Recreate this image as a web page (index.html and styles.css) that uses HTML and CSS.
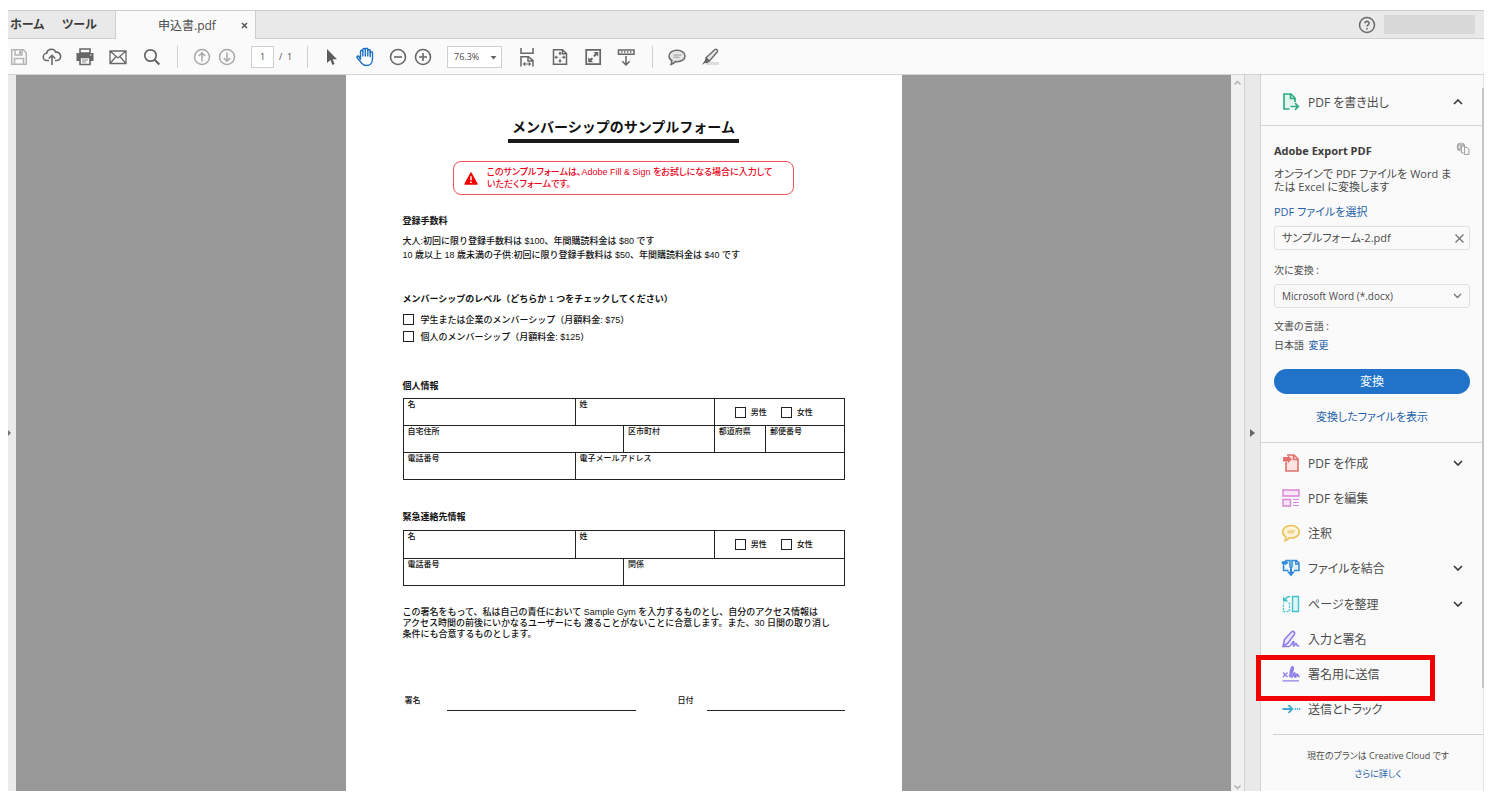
FILE: index.html
```html
<!DOCTYPE html>
<html lang="ja">
<head>
<meta charset="utf-8">
<title>申込書.pdf</title>
<link rel="stylesheet" href="styles.css">
</head>
<body>
<div class="app">
  <header class="tabs">
    <button class="tab tab-home">ホーム</button>
    <button class="tab tab-tools">ツール</button>
    <div class="tab-doc">
      <span class="tab-name">申込書.pdf</span>
      <button class="tab-close" aria-label="閉じる"><svg width="7" height="7" viewBox="0 0 7 7"><path d="M1 1l5 5M6 1L1 6" stroke="#555" stroke-width="1.5"/></svg></button>
    </div>
    <button class="help" aria-label="ヘルプ"><svg width="18" height="18" viewBox="0 0 18 18" fill="none" stroke="#6a6a6a" stroke-width="1.5"><circle cx="9" cy="9" r="7.5"/><path d="M6.9 7.3c0-2.700 4.300-2.500 4.200 0 0 1.500-2.100 1.600-2.100 3.300M9 11.900v1.500" stroke-width="1.600"/></svg></button>
    <div class="account"></div>
  </header>

  <div class="toolbar">
    <div class="group">
      <button class="icon" aria-label="保存"><svg viewBox="0 0 20 20" fill="none" stroke="#b4b4b4" stroke-width="1.500"><path d="M2.700 2.700h11.600l3 3v11.600H2.700zM6 3v5h7V3M5.500 17v-5.500h9V17"/><path d="M11 4v3" stroke-width="2"/></svg></button>
      <button class="icon" aria-label="アップロード"><svg viewBox="0 0 20 20" fill="none" stroke="#6a6a6a" stroke-width="1.600"><path d="M7 13.500H5a3.600 3.600 0 0 1-.3-7.200C5.200 1.600 12 .8 13.800 5.200c3-.3 5 2 4.800 4.600-.2 2.300-1.800 3.700-4 3.700H13"/><path d="M10 18V8.500M6.800 11.500L10 8.300l3.200 3.200"/></svg></button>
      <button class="icon" aria-label="印刷"><svg viewBox="0 0 20 20"><path d="M5 2h10v4H5z" fill="#f9f9f9" stroke="#666" stroke-width="1.600"/><path d="M1.500 6h17v8h-17z" fill="#666"/><path d="M5 10.500h10v7H5z" fill="#f9f9f9" stroke="#666" stroke-width="1.600"/><path d="M7 13h6M7 15h4" stroke="#888"/><path d="M15 8h1.500" stroke="#fff"/></svg></button>
      <button class="icon" aria-label="メール"><svg viewBox="0 0 20 20" fill="none" stroke="#6a6a6a" stroke-width="1.300"><path d="M2 4h16v12.500H2zM2 4l8 7 8-7M2 16.500l6-7M18 16.500l-6-7"/></svg></button>
      <button class="icon" aria-label="検索"><svg viewBox="0 0 20 20" fill="none" stroke="#666"><circle cx="9.500" cy="8.500" r="5.700" stroke-width="1.700"/><path d="M13.700 12.700l4.600 4.800" stroke-width="2.200"/></svg></button>
    </div>
    <div class="rule"></div>
    <div class="group tight">
      <button class="icon" aria-label="前のページ"><svg viewBox="0 0 20 20" fill="none" stroke="#a8a8a8" stroke-width="1.500"><circle cx="10" cy="10" r="7.500"/><path d="M10 14.500V6M6.800 9L10 5.800 13.200 9"/></svg></button>
      <button class="icon" aria-label="次のページ"><svg viewBox="0 0 20 20" fill="none" stroke="#a8a8a8" stroke-width="1.500"><circle cx="10" cy="10" r="7.500"/><path d="M10 5.500V14M6.800 11l3.200 3.200 3.200-3.200"/></svg></button>
    </div>
    <input class="page-no" value="1" aria-label="ページ">
    <span class="page-count">/&nbsp; 1</span>
    <div class="rule"></div>
    <div class="group">
      <button class="icon" aria-label="選択"><svg viewBox="0 0 20 20"><path d="M5 2v14l3.400-3 2 5 2.200-.9-2-4.900H15z" fill="#5c5c5c"/></svg></button>
      <button class="icon" aria-label="手のひら"><svg viewBox="0 0 20 20" fill="#fff" stroke="#1d70c4" stroke-width="1.400" stroke-linejoin="round" stroke-linecap="round"><path d="M5.500 12.200V4.500c0-1.600 2.300-1.600 2.300 0V2.800c0-1.700 2.500-1.700 2.500 0v-.3c0-1.600 2.500-1.600 2.500 0v1c0-1.500 2.400-1.500 2.400 0v2.300c0-1.500 2.300-1.500 2.300 0V12c0 4-2.500 6.500-6 6.500-3.200 0-4.600-1.300-6-3.800L2 10.500c-.6-1.400 1.200-2.200 2-.9z"/><path d="M7.800 4.500V9M10.300 2.800V9M12.800 3v6M15.200 4v5.500"/></svg></button>
      <button class="icon" aria-label="縮小"><svg viewBox="0 0 20 20" fill="none" stroke="#666" stroke-width="1.600"><circle cx="10" cy="10" r="7.500"/><path d="M6 10h8"/></svg></button>
    </div>
    <button class="icon zoom-in" aria-label="拡大"><svg viewBox="0 0 20 20" fill="none" stroke="#666" stroke-width="1.600"><circle cx="10" cy="10" r="7.500"/><path d="M6 10h8M10 6v8"/></svg></button>
    <div class="zoom">
      <select aria-label="表示倍率"><option>76.3%</option></select>
      <svg width="7" height="5" viewBox="0 0 7 5"><path d="M.5 1h6L3.500 4.500z" fill="#666"/></svg>
    </div>
    <div class="group">
      <button class="icon" aria-label="幅に合わせる"><svg viewBox="0 0 20 20" fill="none" stroke="#666" stroke-width="1.500"><path d="M4 1v5.200h12V1M4 19.500V9.700h7.500l4.500 4v5.800M11 9.700V14h5"/><path d="M6.500 17h7M8.300 15.300L6.500 17l1.800 1.700M11.700 15.300l1.800 1.700-1.800 1.700" stroke-width="1.100"/></svg></button>
      <button class="icon" aria-label="ページ全体"><svg viewBox="0 0 20 20" fill="none" stroke="#666" stroke-width="1.500"><path d="M3.500 2.700h9l4 3.800v10.800h-13zM12.500 3v3.700h4"/><path d="M10 5.500v2.700M10 11.800v3M5.500 10.200h2.700M11.800 10.200h2.700M8.700 6.700L10 5.400l1.300 1.300M8.700 13.700L10 15l1.300-1.300M6.500 8.900l-1.300 1.300 1.300 1.300M13.500 8.900l1.300 1.300-1.300 1.300" stroke-width="1.100"/></svg></button>
      <button class="icon" aria-label="フルスクリーン"><svg viewBox="0 0 20 20"><path d="M3.200 2.800h14v14.400h-14z" fill="none" stroke="#666" stroke-width="1.700"/><path d="M10.500 5h4.700v4.700L13.700 8l-2 2-1.500-1.500 2-2zM5.200 10.300v4.900h4.900l-1.700-1.700L10.200 12l-1.600-1.600-1.700 1.700z" fill="#666"/></svg></button>
      <button class="icon" aria-label="スクロール"><svg viewBox="0 0 20 20" fill="none" stroke="#666" stroke-width="1.500"><path d="M2.500 3h15.500v4.200H2.500z"/><path d="M5 5.100h11" stroke-dasharray="1.500 1.500"/><path d="M10 9v9M6.300 14.200L10 18l3.700-3.800"/></svg></button>
    </div>
    <div class="rule"></div>
    <div class="group">
      <button class="icon" aria-label="注釈"><svg viewBox="0 0 20 20" fill="#e6e6e6" stroke="#6a6a6a" stroke-width="1.500"><path d="M10 3.200c4.600 0 8 2.400 8 5.700 0 3.400-3.400 5.800-8 5.800l-1.800-.2c-1.200 1.700-2.600 2.700-4.200 3 .6-1.200.9-2.400.8-4C3 12.400 2 10.800 2 8.900c0-3.300 3.400-5.700 8-5.700z"/><path d="M6.500 8h8M6.500 10.200h6" stroke="#999" stroke-width="1.100"/></svg></button>
      <button class="icon" aria-label="ハイライト"><svg viewBox="0 0 20 20"><path d="M7 15h12v3H6z" fill="#ddd"/><path d="M6 10.800L15 2.600c1.300-1 3.400.7 2.400 2.200l-8 9.100z" fill="#e6e6e6" stroke="#6a6a6a" stroke-width="1.400"/><path d="M5.800 10.500l4 3.600-2.600 2.200L5 16l-3.200 2 3-4.500z" fill="#666"/></svg></button>
    </div>
  </div>

  <main class="work">
    <button class="left-strip" aria-label="ナビゲーションパネル"><svg width="4" height="6" viewBox="0 0 4 6"><path d="M0 0l3 3-3 3z" fill="#777"/></svg></button>
    <div class="viewer">
      <article class="paper">
        <h1>メンバーシップのサンプルフォーム</h1>
        <div class="notice">
          <svg width="14" height="13" viewBox="0 0 14 13"><path d="M7 1l6 11H1z" fill="#f40000" stroke="#f40000" stroke-width="1.500" stroke-linejoin="round"/><path d="M7 4.200v4M7 9.500V11" stroke="#fff" stroke-width="1.500"/></svg>
          <p>このサンプルフォームは、Adobe Fill &amp; Sign をお試しになる場合に入力して<br>いただくフォームです。</p>
        </div>
        <section class="fees">
          <h2>登録手数料</h2>
          <p>大人:初回に限り登録手数料は $100、年間購読料金は $80 です</p>
          <p>10 歳以上 18 歳未満の子供:初回に限り登録手数料は $50、年間購読料金は $40 です</p>
        </section>
        <section class="levels">
          <h2>メンバーシップのレベル（どちらか <span class="num">1</span> つをチェックしてください）</h2>
          <label class="check"><input type="checkbox">学生または企業のメンバーシップ（月額料金: $75）</label>
          <label class="check"><input type="checkbox">個人のメンバーシップ（月額料金: $125）</label>
        </section>
        <section class="personal">
          <h2>個人情報</h2>
          <table>
            <colgroup><col class="c1"><col class="c2"><col class="c3"><col class="c4"><col class="c5"></colgroup>
            <tr><td><label for="p1">名</label><input id="p1"></td><td colspan="2"><label for="p2">姓</label><input id="p2"></td><td colspan="2"><div class="sex"><label class="check"><input type="checkbox">男性</label><label class="check"><input type="checkbox">女性</label></div></td></tr>
            <tr><td colspan="2"><label for="p3">自宅住所</label><input id="p3"></td><td><label for="p4">区市町村</label><input id="p4"></td><td><label for="p5">都道府県</label><input id="p5"></td><td><label for="p6">郵便番号</label><input id="p6"></td></tr>
            <tr><td><label for="p7">電話番号</label><input id="p7"></td><td colspan="4"><label for="p8">電子メールアドレス</label><input id="p8"></td></tr>
          </table>
        </section>
        <section class="emergency">
          <h2>緊急連絡先情報</h2>
          <table>
            <colgroup><col class="c1"><col class="c2"><col class="c3"><col class="c4"><col class="c5"></colgroup>
            <tr class="tall"><td><label for="e1">名</label><input id="e1"></td><td colspan="2"><label for="e2">姓</label><input id="e2"></td><td colspan="2"><div class="sex"><label class="check"><input type="checkbox">男性</label><label class="check"><input type="checkbox">女性</label></div></td></tr>
            <tr><td colspan="2"><label for="e3">電話番号</label><input id="e3"></td><td colspan="3"><label for="e4">関係</label><input id="e4"></td></tr>
          </table>
        </section>
        <p class="consent">この署名をもって、私は自己の責任において Sample Gym を入力するものとし、自分のアクセス情報は<br>アクセス時間の前後にいかなるユーザーにも 渡ることがないことに合意します。また、30 日間の取り消し<br>条件にも合意するものとします。</p>
        <div class="signature">
          <label for="sign">署名</label><input id="sign">
          <label for="date" class="date">日付</label><input id="date">
        </div>
      </article>
    </div>
    <div class="scroll">
      <svg width="7" height="5" viewBox="0 0 7 5"><path d="M.5 4.500l3-3 3 3" fill="none" stroke="#aaa" stroke-width="1.300"/></svg>
      <svg width="7" height="5" viewBox="0 0 7 5"><path d="M.5.5l3 3 3-3" fill="none" stroke="#aaa" stroke-width="1.300"/></svg>
    </div>
    <button class="right-strip" aria-label="ツールパネル"><svg width="5" height="8" viewBox="0 0 5 8"><path d="M0 0l5 4-5 4z" fill="#666"/></svg></button>

    <aside class="side">
      <div class="thumb"></div>
      <button class="row row-head">
        <svg class="row-icon" viewBox="0 0 20 20" fill="none" stroke="#2dac84" stroke-width="1.700"><path d="M8.500 17H3V2h7l4 4v4" fill="#e3f4ee"/><path d="M9.500 2v4.500H14M9.500 14.500H16M14 11.200l3.300 3.300-3.300 3.300"/></svg>
        <span>PDF を書き出し</span>
        <svg class="chev" viewBox="0 0 10 6"><path d="M1 5l4-4 4 4" fill="none" stroke="#3c3c3c" stroke-width="1.700"/></svg>
      </button>
      <section class="export">
        <h2>Adobe Export PDF<svg width="14" height="14" viewBox="0 0 14 14" fill="none" stroke="#a4a4a4"><circle cx="5" cy="5" r="4" fill="#aaa"/><path d="M1 5h8M5 1c-2 2.500-2 5.500 0 8M5 1c2 2.500 2 5.500 0 8" stroke="#eee" stroke-width=".6"/><path d="M5.500 4h3v7h-3zM8.500 5.500h3l1.500 1.500v5.500H8.500z" fill="#f5f5f5"/></svg></h2>
        <p class="desc">オンラインで PDF ファイルを Word ま<br>たは Excel に変換します</p>
        <a class="pick" href="#">PDF ファイルを選択</a>
        <div class="file"><span>サンプルフォーム-2.pdf</span><button aria-label="削除"><svg width="9" height="9" viewBox="0 0 9 9"><path d="M.5.5l8 8M8.500.5l-8 8" stroke="#777" stroke-width="1.400"/></svg></button></div>
        <label class="to" for="fmt">次に変換 :</label>
        <div class="format">
          <select id="fmt"><option>Microsoft Word (*.docx)</option></select>
          <svg width="9" height="6" viewBox="0 0 9 6"><path d="M1 1l3.500 3.500L8 1" fill="none" stroke="#777" stroke-width="1.400"/></svg>
        </div>
        <p class="lang">文書の言語 :</p>
        <p class="lang-value">日本語 <a href="#">変更</a></p>
        <button class="convert">変換</button>
        <a class="show" href="#">変換したファイルを表示</a>
      </section>
      <nav class="tools">
        <button class="row">
          <svg class="row-icon" viewBox="0 0 20 20" fill="none" stroke="#e0716c" stroke-width="1.600"><path d="M5 9v9h12V6l-4-4H6" fill="#fbe3e1"/><path d="M12.500 2v4.500H17"/><path d="M2 4h5V2.500l4 3.800-4 3.700V8.500H2z" fill="#e0716c" stroke="none"/></svg>
          <span>PDF を作成</span><svg class="chev" viewBox="0 0 10 6"><path d="M1 1l4 4 4-4" fill="none" stroke="#3c3c3c" stroke-width="1.700"/></svg></button>
        <button class="row">
          <svg class="row-icon" viewBox="0 0 20 20" fill="none" stroke="#dc82d8" stroke-width="1.400"><path d="M2 2h16v6H2zM2 11.500h7.500V18H2z" fill="#fae6f9"/><path d="M12 11.500h6M12 14.500h6M12 17.500h6" stroke-width="1.100"/></svg>
          <span>PDF を編集</span></button>
        <button class="row">
          <svg class="row-icon" viewBox="0 0 20 20" fill="#fdf3d9" stroke="#edc057" stroke-width="1.600"><path d="M10 2.500c4.800 0 8.300 2.700 8.300 6.300S14.800 15 10 15l-1.800-.2c-1.200 1.700-2.700 2.700-4.200 3 .6-1.200.8-2.500.7-4C2.800 12.700 1.700 11 1.700 8.800c0-3.600 3.500-6.300 8.300-6.300z"/><path d="M6.500 8h7.500M6.500 9.800h6" stroke-width="1.100"/></svg>
          <span>注釈</span></button>
        <button class="row">
          <svg class="row-icon" viewBox="0 0 20 20" fill="#e1effb" stroke="#318bd8" stroke-width="1.500"><path d="M7.500 12.500h-5V6M4.500 2.500H9v7M11 9.500v-7h4.500L18 5v7.500h-5M14.800 2.500V6H18"/><path d="M.8 3.200h3V1.800L7.500 4.700 3.800 7.500V6h-3z" fill="#318bd8" stroke="none"/><path d="M10 9v6" stroke-width="2"/><path d="M6 13.500h8L10 18.500z" fill="#318bd8" stroke="none"/></svg>
          <span>ファイルを結合</span><svg class="chev" viewBox="0 0 10 6"><path d="M1 1l4 4 4-4" fill="none" stroke="#3c3c3c" stroke-width="1.700"/></svg></button>
        <button class="row">
          <svg class="row-icon" viewBox="0 0 20 20" fill="none" stroke="#45c3cb" stroke-width="1.400"><path d="M11.500 2.500h6v15h-6z" fill="#dcf5f6"/><path d="M8.500 8.500v9h-6v-9" stroke-dasharray="2 1.300"/><path d="M9 2.500C6 2.500 5 3.500 4.500 6"/><path d="M2 2.500v5h5.500z" fill="#45c3cb" stroke="none"/></svg>
          <span>ページを整理</span><svg class="chev" viewBox="0 0 10 6"><path d="M1 1l4 4 4-4" fill="none" stroke="#3c3c3c" stroke-width="1.700"/></svg></button>
        <button class="row">
          <svg class="row-icon" viewBox="0 0 20 20" fill="none" stroke="#8e80ea" stroke-width="1.600" stroke-linejoin="round" stroke-linecap="round"><path d="M2 17.500l1.500-7L10.500 3c1.700-1.500 4.200.5 2.800 2.500L7 14z" fill="#ebe8fc"/><path d="M2 17.500h6c2.300 0 3.200-5 4.500-5 1.200 0-1 4.500.3 4.500 1.200 0 1.300-2.800 2.200-2.800s-.3 3 2.800 2.800"/></svg>
          <span>入力と署名</span></button>
        <button class="row marked">
          <svg class="row-icon" viewBox="0 0 20 20" fill="none" stroke="#8e80ea" stroke-width="1.300"><path d="M2 8.500l4.500 4.500M6.500 8.500L2 13M1.500 16.800h16.500"/><path d="M8 12.500c3-1.500 5.200-9.500 3.500-9.500-1.700 0-3.200 10-1 10 1.700 0 2.200-4 3-4s-.5 4 .7 4 1-2.700 1.800-2.700.2 2.500 2.500 2.200" stroke-width="1.900"/></svg>
          <span>署名用に送信</span></button>
        <button class="row">
          <svg class="row-icon" viewBox="0 0 20 20" fill="none" stroke="#3fa9d4" stroke-width="1.800"><path d="M1.500 10h9.500M7.500 6.200L11.300 10l-3.800 3.800"/><path d="M13.500 10h6" stroke-width="1.300" stroke-dasharray="1.500 .7"/></svg>
          <span>送信とトラック</span></button>
      </nav>
      <footer class="plan">現在のプランは Creative Cloud です<a href="#">さらに詳しく</a></footer>
    </aside>
  </main>
</div>
</body>
</html>
```

FILE: styles.css
```css
* { box-sizing: border-box; }

body {
  margin: 0;
  padding: 10px 14px 13px 8px;
  height: 100vh;
  background: #fff;
  color: #4b4b4b;
  font-family: "Open Sans", "Noto Sans CJK JP", sans-serif;
  font-size: 11px;
  font-feature-settings: "palt";
}

h1, h2, p { margin: 0; }

button, input, select {
  margin: 0;
  padding: 0;
  border: 0;
  background: none;
  color: inherit;
  font: inherit;
  font-feature-settings: inherit;
}

svg { display: block; flex: none; }
a { color: #1f5fa8; text-decoration: none; }

.app { height: 100%; display: flex; flex-direction: column; }

/* Tabs */
.tabs {
  display: flex;
  align-items: center;
  height: 29px;
  flex: none;
  background: #e9e9e9;
  border-top: 1px solid #cdcdcd;
  border-bottom: 1px solid #cdcdcd;
}
.tab { font-size: 12px; font-weight: 600; color: #3c3c3c; line-height: 20px; }
.tab-home { padding-left: 2px; width: 54px; text-align: left; }
.tab-tools { width: 53px; text-align: left; }
.tab-doc {
  display: flex;
  align-items: center;
  justify-content: space-between;
  width: 141px;
  height: 29px;
  margin: 0 0 -1px;
  padding: 0 7px 0 42px;
  background: #fafafa;
  border: solid #cdcdcd;
  border-width: 0 1px;
  font-size: 12px;
}
.help { margin-left: auto; }
.account { width: 91px; height: 19px; margin: 0 9px 0 8px; background: #d8d8d8; }

/* Toolbar */
.toolbar {
  display: flex;
  align-items: center;
  flex: none;
  height: 36px;
  padding-left: 1px;
  background: #fafafa;
  border-bottom: 1px solid #d4d4d4;
}
.group { display: flex; gap: 13px; }
.tight { gap: 5px; }
.icon { width: 20px; height: 20px; }
.icon svg { width: 20px; height: 20px; }
.rule { width: 1px; height: 22px; margin: 0 14px 0 16px; background: #d0d0d0; }
.zoom-in { margin-left: 5px; }
.page-no {
  width: 23px;
  height: 22px;
  margin: 0 5px 0 14px;
  border: 1px solid #cfcfcf;
  background: #fff;
  font-size: 9px;
  text-align: center;
}
.page-count { width: 12px; font-size: 9px; white-space: nowrap; }
.zoom { position: relative; margin: 0 15px 0 14px; }
.zoom select {
  display: block;
  width: 55px;
  height: 22px;
  padding-left: 6px;
  appearance: none;
  border: 1px solid #cfcfcf;
  background: #fff;
  font-size: 9px;
}
.zoom svg { position: absolute; right: 5px; top: 9px; pointer-events: none; }

/* Work area */
.work { display: flex; flex: 1; min-height: 0; }
.left-strip { width: 8px; background: #ebebeb; }
.viewer { flex: 1; display: flex; justify-content: center; background: #999; overflow: hidden; }
.scroll {
  display: flex;
  flex-direction: column;
  justify-content: space-between;
  align-items: center;
  width: 14px;
  padding: 5px 0 1px;
  background: #f1f1f1;
  border-right: 1px solid #d2d2d2;
}
.right-strip {
  width: 15px;
  padding-left: 5px;
  background: #e9e9e9;
}

/* PDF page */
.paper {
  width: 556px;
  padding: 43px 57px 0;
  background: #fff;
  color: #111;
  font: 500 9px/14px "Liberation Sans", "Noto Sans CJK JP", sans-serif;
  font-feature-settings: normal;
}
.paper h1 {
  width: fit-content;
  margin: 0 auto;
  padding: 0 4px 3px;
  border-bottom: 4px solid #1c1a1c;
  font-size: 14px;
  line-height: 18px;
}
.paper h2 { font-size: 9px; font-weight: 700; line-height: 14px; }
.paper .num { font-weight: 400; }
.notice {
  display: flex;
  align-items: center;
  gap: 9px;
  width: 341px;
  margin: 18px auto 0;
  padding: 4px 0 4px 10px;
  border: 1px solid #f0505a;
  border-radius: 8px;
  color: #ec0018;
  line-height: 12px;
  font-feature-settings: "palt";
  white-space: nowrap;
}
.fees { margin-top: 19px; }
.fees h2 { margin-bottom: 6px; }
.levels { margin-top: 30px; }
.levels h2 { margin-bottom: 5px; }
.check { display: flex; align-items: center; gap: 7px; height: 17px; }
.check input {
  width: 11px;
  height: 11px;
  appearance: none;
  border: 1px solid #222;
  background: #fff;
}
.personal { margin-top: 34px; }
.personal h2 { margin-bottom: 5px; }
.emergency { margin-top: 30px; }
.emergency h2 { margin-bottom: 6px; }
table { width: 100%; table-layout: fixed; border-collapse: collapse; font-size: 8px; }
.c1 { width: 39%; }
.c2 { width: 11%; }
.c3 { width: 20.6%; }
.c4 { width: 11.6%; }
.c5 { width: 17.8%; }
td { height: 27px; padding: 0 4px; border: 1px solid #222; vertical-align: top; line-height: 12px; }
.tall td { height: 28px; }
td > label { display: block; }
td > input { display: block; width: 100%; height: 12px; }
.sex { display: flex; gap: 14px; padding: 5px 0 0 16px; }
.sex .check { gap: 5px; }
.consent { margin-top: 21px; line-height: 11px; white-space: nowrap; }
.signature {
  display: grid;
  grid-template-columns: 44fr 189fr 71fr 138fr;
  margin-top: 54px;
  font-size: 8px;
}
.signature label { padding-left: 2px; }
.signature .date { padding: 0 13px 0 0; text-align: right; }
.signature input { width: 100%; height: 17px; border-bottom: 1px solid #222; }

/* Tool panel */
.side {
  position: relative;
  display: flex;
  flex-direction: column;
  width: 224px;
  background: #fafafa;
  border-left: 1px solid #d2d2d2;
  border-right: 1px solid #e2e2e2;
}
.thumb { position: absolute; top: 13px; right: -1px; width: 2px; height: 600px; background: #c6c6c6; }
.row {
  display: flex;
  align-items: center;
  flex: 1;
  width: 100%;
  padding: 0 20px;
  font-size: 12px;
  text-align: left;
  white-space: nowrap;
}
.row-icon { width: 20px; height: 20px; margin-right: 7px; }
.chev { width: 10px; height: 6px; margin-left: auto; }
.row-head { flex: none; height: 51px; padding-top: 4px; border-bottom: 1px solid #d6d6d6; }
.export {
  display: flex;
  flex-direction: column;
  padding: 16px 13px 17px;
  border-bottom: 1px solid #d6d6d6;
  line-height: 16px;
}
.export h2 { display: flex; justify-content: space-between; font-size: 11px; line-height: 18px; color: #3c3c3c; }
.desc { margin-top: 7px; line-height: 13px; white-space: nowrap; }
.pick { margin-top: 11px; }
.file, .format select { height: 24px; border: 1px solid #e0e0e0; border-radius: 3px; }
.file {
  display: flex;
  align-items: center;
  justify-content: space-between;
  margin: 6px 0 12px;
  padding: 0 5px 0 7px;
}
.format { position: relative; margin: 6px 0 10px; }
.format select { display: block; width: 100%; padding-left: 7px; appearance: none; font-size: 10px; }
.format svg { position: absolute; right: 8px; top: 9px; pointer-events: none; }
.to, .lang, .lang-value { font-size: 10px; }
.lang-value { margin-top: 3px; }
.lang-value a { margin-left: 2px; }
.convert {
  height: 25px;
  margin: 16px 0 15px;
  border-radius: 13px;
  background: #2073c8;
  color: #fff;
  font-size: 12px;
}
.show { text-align: center; }
.tools { display: flex; flex-direction: column; flex: 1; padding: 2px 0 7px; }
.marked { position: relative; }
.marked::after {
  content: "";
  position: absolute;
  inset: -2px 48px -9px -5px;
  border: 5px solid #f00000;
}
.plan {
  display: flex;
  flex-direction: column;
  align-items: center;
  margin-left: 12px;
  padding: 12px 0 8px;
  border-top: 1px solid #d0d0d0;
  font-size: 9px;
  line-height: 18px;
}
```
